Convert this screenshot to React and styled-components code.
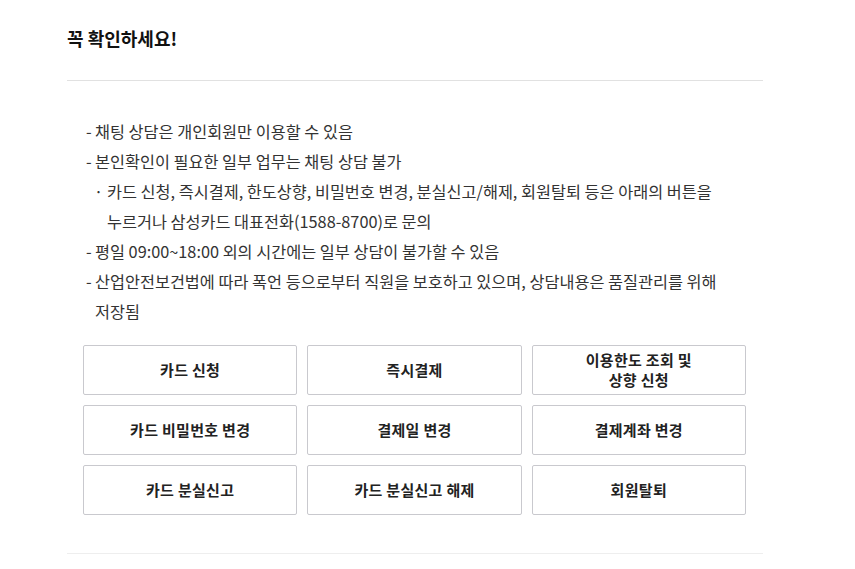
import React from "react";
import styled, { createGlobalStyle } from "styled-components";

const Global = createGlobalStyle`
  html, body { margin: 0; padding: 0; background: #fff; }
  body { font-family: "Noto Sans CJK KR", "Noto Sans", sans-serif; color: #333; }
  * { box-sizing: border-box; }
`;

const Section = styled.section`
  width: 696px;
  margin-left: 67px;
  border-bottom: 1px solid #eeeeee;
  padding-bottom: 38px;
`;

const Header = styled.div`
  height: 81px;
  padding-top: 25px;
  border-bottom: 1px solid #e1e1e1;
`;

const Title = styled.h2`
  margin: 0;
  font-size: 18px;
  line-height: 26px;
  font-weight: 700;
  color: #111;
`;

const Body = styled.div`
  padding: 35px 17px 0 16px;
`;

const List = styled.ul`
  list-style: none;
  margin: 0;
  padding: 0 0 0 3px;
  font-size: 16.3px;
  line-height: 30px;
  color: #333;
  word-break: keep-all;
`;

const Item = styled.li`
  position: relative;
  padding-left: ${(p) => (p.$sub ? "21px" : "9px")};
  &::before {
    content: "${(p) => (p.$sub ? "·" : "-")}";
    position: absolute;
    left: ${(p) => (p.$sub ? "8px" : "0")};
    top: 0;
  }
`;

const Grid = styled.div`
  margin-top: 19px;
  display: grid;
  grid-template-columns: repeat(3, 1fr);
  grid-auto-rows: 50px;
  gap: 10px;
`;

const Button = styled.button`
  display: flex;
  align-items: center;
  justify-content: center;
  text-align: center;
  background: #fff;
  border: 1px solid #c9c9ce;
  border-radius: 2px;
  font-family: inherit;
  font-size: 15px;
  line-height: 20px;
  letter-spacing: 0.3px;
  font-weight: 700;
  color: #222;
  padding: 0 10px;
  cursor: pointer;
`;

const buttons = [
  "카드 신청",
  "즉시결제",
  ["이용한도 조회 및", "상향 신청"],
  "카드 비밀번호 변경",
  "결제일 변경",
  "결제계좌 변경",
  "카드 분실신고",
  "카드 분실신고 해제",
  "회원탈퇴",
];

export default function App() {
  return (
    <>
      <Global />
      <Section>
        <Header>
          <Title>꼭 확인하세요!</Title>
        </Header>
        <Body>
          <List>
            <Item>채팅 상담은 개인회원만 이용할 수 있음</Item>
            <Item>본인확인이 필요한 일부 업무는 채팅 상담 불가</Item>
            <Item $sub>
              카드 신청, 즉시결제, 한도상향, 비밀번호 변경, 분실신고/해제, 회원탈퇴 등은 아래의 버튼을 누르거나 삼성카드 대표전화(1588-8700)로 문의
            </Item>
            <Item>평일 09:00~18:00 외의 시간에는 일부 상담이 불가할 수 있음</Item>
            <Item>
              산업안전보건법에 따라 폭언 등으로부터 직원을 보호하고 있으며, 상담내용은 품질관리를 위해 저장됨
            </Item>
          </List>
          <Grid>
            {buttons.map((b, i) => (
              <Button key={i} type="button">
                {Array.isArray(b) ? (
                  <span>
                    {b[0]}
                    <br />
                    {b[1]}
                  </span>
                ) : (
                  b
                )}
              </Button>
            ))}
          </Grid>
        </Body>
      </Section>
    </>
  );
}
